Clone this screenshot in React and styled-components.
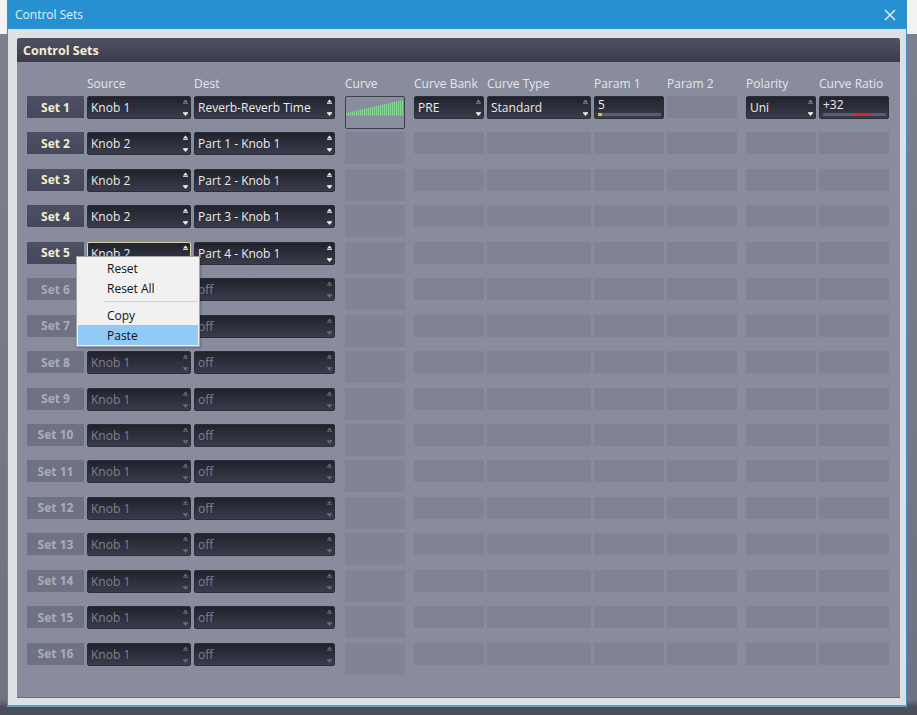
import React from "react";
import styled, { createGlobalStyle, css } from "styled-components";

const GlobalStyle = createGlobalStyle`
  html, body { margin: 0; padding: 0; }
  body {
    width: 917px;
    height: 715px;
    overflow: hidden;
    background: linear-gradient(#f2f2f2 0, #f2f2f2 34px, #7d808c 34px, #6f7280 700px, #4b4e5b 707px);
    font-family: "Open Sans", "Noto Sans", sans-serif;
  }
`;

const TEMPLATE = "57px 104px 141px 67px 76px 104px 70px 70px 76px 70px";

const endAligned = css`
  ${(p) =>
    p.$w &&
    css`
      justify-self: end;
      width: ${p.$w}px;
    `}
`;

const Page = styled.div`
  width: 917px;
  height: 715px;
  box-sizing: border-box;
  padding-left: 7px;
  display: flex;
  flex-direction: column;
`;

const Window = styled.div`
  position: relative;
  width: 900px;
  height: 707px;
  flex: none;
  box-sizing: border-box;
  display: flex;
  flex-direction: column;
  background: #dfe0e3;
  border-left: 1px solid #3b8fca;
  border-right: 1px solid #3b8fca;
  border-bottom: 2px solid #5aa2cb;
`;

const TitleBar = styled.div`
  height: 29px;
  flex: none;
  background: #2790d0;
  display: flex;
  align-items: center;
  justify-content: space-between;
  padding: 0 6px 0 7px;
  color: #e2f1fb;
  font-size: 12px;
`;

const CloseBtn = styled.svg`
  width: 12px;
  height: 12px;
  margin-right: 4px;
`;

const Frame = styled.div`
  flex: 1;
  display: flex;
  padding: 9px 6px 8px 9px;
`;

const Panel = styled.div`
  flex: 1;
  display: flex;
  flex-direction: column;
  border-radius: 2px 2px 0 0;
  overflow: hidden;
  box-shadow: 0 1px 0 #6a6d7c;
`;

const PanelHeader = styled.div`
  height: 24px;
  flex: none;
  display: flex;
  align-items: center;
  padding-left: 6px;
  background: linear-gradient(#4f5164, #3b3d4c);
  color: #f3edd2;
  font-weight: 700;
  font-size: 12.5px;
`;

const PanelBody = styled.div`
  flex: 1;
  background: #888c9d;
  padding: 13px 0 0 10px;
  display: flex;
  flex-direction: column;
`;

const HeadRow = styled.div`
  display: grid;
  grid-template-columns: ${TEMPLATE};
  column-gap: 3px;
  height: 17px;
  margin-bottom: 4px;
`;

const HeadLabel = styled.div`
  font-size: 12px;
  line-height: 17px;
  color: #e4e6ee;
  white-space: nowrap;
  ${endAligned}
`;

const Row = styled.div`
  display: grid;
  grid-template-columns: ${TEMPLATE};
  column-gap: 3px;
  align-items: start;
  height: 36.45px;
`;

const SetLabel = styled.div`
  height: 22px;
  display: flex;
  align-items: center;
  justify-content: center;
  font-weight: 700;
  font-size: 12px;
  background: ${(p) => (p.$off ? "#6e7284" : "linear-gradient(#4d4f63, #45475a)")};
  color: ${(p) => (p.$off ? "#a9adba" : "#f4eece")};
`;

const SelectBox = styled.div`
  height: 23px;
  box-sizing: border-box;
  display: flex;
  align-items: center;
  border-radius: 2px;
  background: linear-gradient(#20222c, #3a3c4b);
  border: 1px solid ${(p) => (p.$focus ? "#d8d39c" : "#2a2c37")};
  padding-left: 3px;
  color: ${(p) => (p.$off ? "#7e8190" : "#ececec")};
  font-size: 12px;
  white-space: nowrap;
  overflow: hidden;
  ${endAligned}
`;

const SelectText = styled.span`
  flex: 1;
  overflow: hidden;
`;

const Spin = styled.svg`
  width: 7px;
  height: 21px;
  flex: none;
  margin-right: 1px;
`;

const Tile = styled.div`
  height: ${(p) => (p.$tall ? 32 : 22)}px;
  background: ${(p) => (p.$tall ? "#808495" : "#7f8394")};
  ${endAligned}
`;

const CurveBox = styled.div`
  height: 33px;
  box-sizing: border-box;
  border: 1px solid #3b3d4b;
  border-radius: 2px;
  background: #8a8d9e;
  display: flex;
  justify-content: center;
  padding-top: 2px;
  ${endAligned}
`;

const Field = styled.div`
  height: 23px;
  box-sizing: border-box;
  border-radius: 2px;
  background: linear-gradient(#20222c, #3a3c4b);
  border: 1px solid #2a2c37;
  display: flex;
  flex-direction: column;
  padding: 0 2px 3px 3px;
  color: #ececec;
  font-size: 12px;
  ${endAligned}
`;

const FieldText = styled.div`
  flex: 1;
  line-height: 16px;
`;

const Bar = styled.div`
  height: 3px;
  border-radius: 1px;
  background: #5b5e6f;
  display: flex;
`;

const BarFill = styled.div`
  height: 3px;
  margin-left: ${(p) => p.$at}px;
  width: ${(p) => p.$len}px;
  background: ${(p) => p.$color};
`;

const Menu = styled.div`
  position: absolute;
  left: 68px;
  top: 256px;
  width: 124px;
  box-sizing: border-box;
  background: #f1f1f1;
  border: 1px solid #a4a4a4;
  box-shadow: 1px 1px 2px rgba(0, 0, 0, 0.25);
  padding: 1px 0 1px;
  display: flex;
  flex-direction: column;
`;

const MenuItem = styled.div`
  height: 20px;
  display: flex;
  align-items: center;
  padding-left: 29px;
  margin: 0 1px;
  font-size: 12px;
  color: #111;
  background: ${(p) => (p.$hot ? "#91c9f7" : "transparent")};
`;

const MenuSep = styled.div`
  height: 1px;
  background: #d2d2d2;
  margin: 3px 1px 3px 27px;
`;

function Spinner({ upDim, off }) {
  const on = off ? "#666978" : "#f2f2f2";
  const dim = off ? "#666978" : "#7a7d8b";
  return (
    <Spin viewBox="0 0 7 21">
      <polygon points="1,5.5 3.5,2.5 6,5.5" fill={upDim ? dim : on} />
      <rect x="1" y="6" width="5" height="0.8" fill={upDim ? dim : on} />
      <polygon points="1,16 3.5,19 6,16" fill={on} />
      <rect x="1" y="15.2" width="5" height="0.8" fill={on} />
    </Spin>
  );
}

function Select({ value, off, focus, upDim, w }) {
  return (
    <SelectBox $off={off} $focus={focus} $w={w}>
      <SelectText>{value}</SelectText>
      <Spinner upDim={upDim} off={off} />
    </SelectBox>
  );
}

function CurveGraph() {
  const gaps = [];
  for (let i = 0; i < 29; i++) {
    gaps.push(
      <rect key={i} x={i * 2 + 1.2} y="0" width="0.8" height="16" fill="#8a8d9e" />
    );
  }
  return (
    <svg width="58" height="17" viewBox="0 0 58 17">
      <rect x="0" y="16" width="58" height="1" fill="#a0aab0" opacity="0.55" />
      <polygon points="0,16 0,14 57,1 57,16" fill="#86d592" />
      {gaps}
    </svg>
  );
}

const HEADERS = [
  { t: "" },
  { t: "Source" },
  { t: "Dest" },
  { t: "Curve", w: 60 },
  { t: "Curve Bank", w: 70 },
  { t: "Curve Type" },
  { t: "Param 1" },
  { t: "Param 2" },
  { t: "Polarity", w: 70 },
  { t: "Curve Ratio" },
];

const ROWS = [
  { src: "Knob 1", dest: "Reverb-Reverb Time", first: true },
  { src: "Knob 2", dest: "Part 1 - Knob 1" },
  { src: "Knob 2", dest: "Part 2 - Knob 1" },
  { src: "Knob 2", dest: "Part 3 - Knob 1" },
  { src: "Knob 2", dest: "Part 4 - Knob 1", focus: true },
  ...Array.from({ length: 11 }, () => ({ src: "Knob 1", dest: "off", off: true })),
];

function EmptyCells() {
  return (
    <>
      <Tile $tall $w={60} />
      <Tile $w={70} />
      <Tile />
      <Tile />
      <Tile />
      <Tile $w={70} />
      <Tile />
    </>
  );
}

function FirstCells() {
  return (
    <>
      <CurveBox $w={60}>
        <CurveGraph />
      </CurveBox>
      <Select value="PRE" upDim w={70} />
      <Select value="Standard" upDim />
      <Field>
        <FieldText>5</FieldText>
        <Bar>
          <BarFill $at={0} $len={4} $color="#d9c12c" />
        </Bar>
      </Field>
      <Tile />
      <Select value="Uni" upDim w={70} />
      <Field>
        <FieldText>+32</FieldText>
        <Bar>
          <BarFill $at={31} $len={18} $color="#d42a2a" />
        </Bar>
      </Field>
    </>
  );
}

export default function App() {
  return (
    <>
      <GlobalStyle />
      <Page>
        <Window>
          <TitleBar>
            <span>Control Sets</span>
            <CloseBtn viewBox="0 0 12 12">
              <path d="M1 1 L11 11 M11 1 L1 11" stroke="#f2f8fc" strokeWidth="1.2" />
            </CloseBtn>
          </TitleBar>
          <Frame>
            <Panel>
              <PanelHeader>Control Sets</PanelHeader>
              <PanelBody>
                <HeadRow>
                  {HEADERS.map((h, i) => (
                    <HeadLabel key={i} $w={h.w}>
                      {h.t}
                    </HeadLabel>
                  ))}
                </HeadRow>
                {ROWS.map((r, i) => (
                  <Row key={i}>
                    <SetLabel $off={r.off}>Set {i + 1}</SetLabel>
                    <Select value={r.src} off={r.off} focus={r.focus} upDim={r.first} />
                    <Select value={r.dest} off={r.off} />
                    {r.first ? <FirstCells /> : <EmptyCells />}
                  </Row>
                ))}
              </PanelBody>
            </Panel>
          </Frame>
          <Menu>
            <MenuItem>Reset</MenuItem>
            <MenuItem>Reset All</MenuItem>
            <MenuSep />
            <MenuItem>Copy</MenuItem>
            <MenuItem $hot>Paste</MenuItem>
          </Menu>
        </Window>
      </Page>
    </>
  );
}
